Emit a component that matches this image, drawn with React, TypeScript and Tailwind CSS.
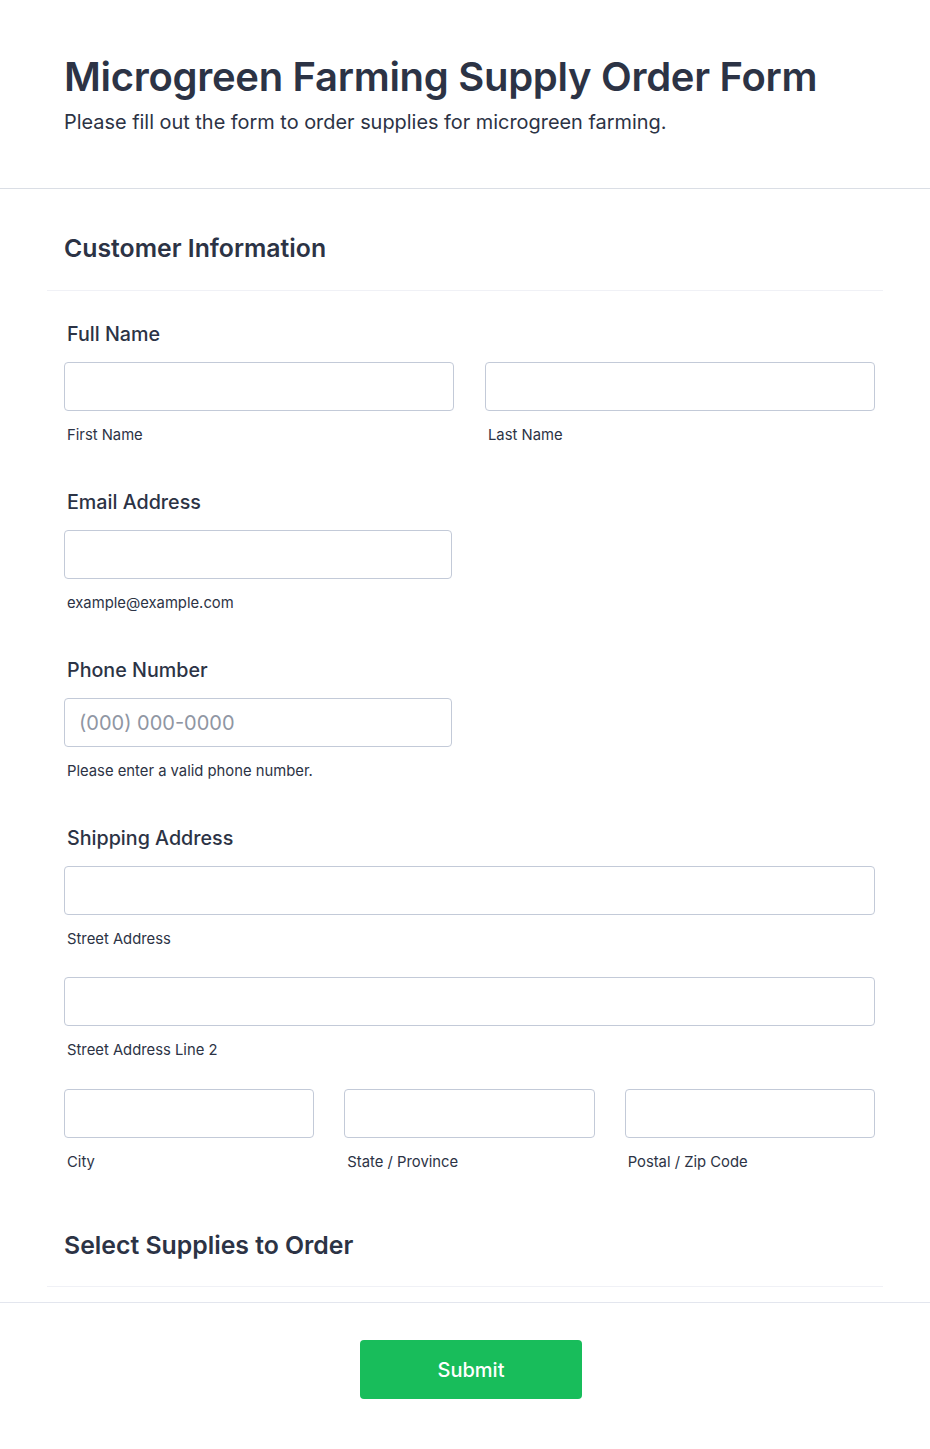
import React from "react";

const font = { fontFamily: "Inter, 'Noto Sans', sans-serif" };

function Field({ sub, placeholder, className = "" }: { sub?: string; placeholder?: string; className?: string }) {
  return (
    <div className={className}>
      <input
        className="block w-full h-[49px] rounded-[4px] border border-[#c3cad8] bg-white px-[14px] text-[20px] text-[#2c3345] placeholder:text-[#8f96a3] outline-none"
        placeholder={placeholder}
      />
      {sub && <div className="mt-[14px] pl-[3px] text-[14.8px] leading-[20px] text-[#2c3345]">{sub}</div>}
    </div>
  );
}

function Label({ children }: { children: React.ReactNode }) {
  return <div className="pl-[3px] text-[19.7px] leading-[24px] font-medium text-[#2c3345] mb-[16px]">{children}</div>;
}

export default function App() {
  return (
    <div className="w-[930px] min-h-[1449px] bg-white text-[#2c3345]" style={font}>
      <header className="px-[64px] pt-[53px] h-[189px] border-b border-[#dadee5]">
        <h1 className="text-[40px] leading-[48px] font-semibold tracking-[-0.3px]">Microgreen Farming Supply Order Form</h1>
        <p className="mt-[8px] text-[19.9px] leading-[26px]">Please fill out the form to order supplies for microgreen farming.</p>
      </header>

      <section className="px-[47px] border-b border-[#e3e6ee]">
        <div className="pt-[43px] pb-[26px] border-b border-[#f0f1f6]">
          <h2 className="pl-[17px] text-[24.8px] leading-[32px] font-semibold">Customer Information</h2>
        </div>

        <div className="px-[17px] pt-[31px]">
          <Label>Full Name</Label>
          <div className="flex gap-[31px] w-[811px]">
            <Field sub="First Name" className="flex-1" />
            <Field sub="Last Name" className="flex-1" />
          </div>

          <div className="mt-[45px]">
            <Label>Email Address</Label>
            <Field sub="example@example.com" className="w-[388px]" />
          </div>

          <div className="mt-[45px]">
            <Label>Phone Number</Label>
            <Field sub="Please enter a valid phone number." placeholder="(000) 000-0000" className="w-[388px]" />
          </div>

          <div className="mt-[45px] w-[811px]">
            <Label>Shipping Address</Label>
            <Field sub="Street Address" />
            <Field sub="Street Address Line 2" className="mt-[28px]" />
            <div className="mt-[29px] flex gap-[30px]">
              <Field sub="City" className="flex-1" />
              <Field sub="State / Province" className="flex-1" />
              <Field sub="Postal / Zip Code" className="flex-1" />
            </div>
          </div>
        </div>

        <div className="pt-[57px] pb-[25px] border-b border-[#f0f1f6]">
          <h2 className="pl-[17px] text-[24.8px] leading-[32px] font-semibold">Select Supplies to Order</h2>
        </div>
        <div className="h-[15px]" />
      </section>

      <div className="flex justify-center pt-[37px] pl-[12px]">
        <button className="w-[222px] h-[59px] rounded-[4px] bg-[#18bd5b] text-white text-[20px] font-medium">Submit</button>
      </div>
    </div>
  );
}
